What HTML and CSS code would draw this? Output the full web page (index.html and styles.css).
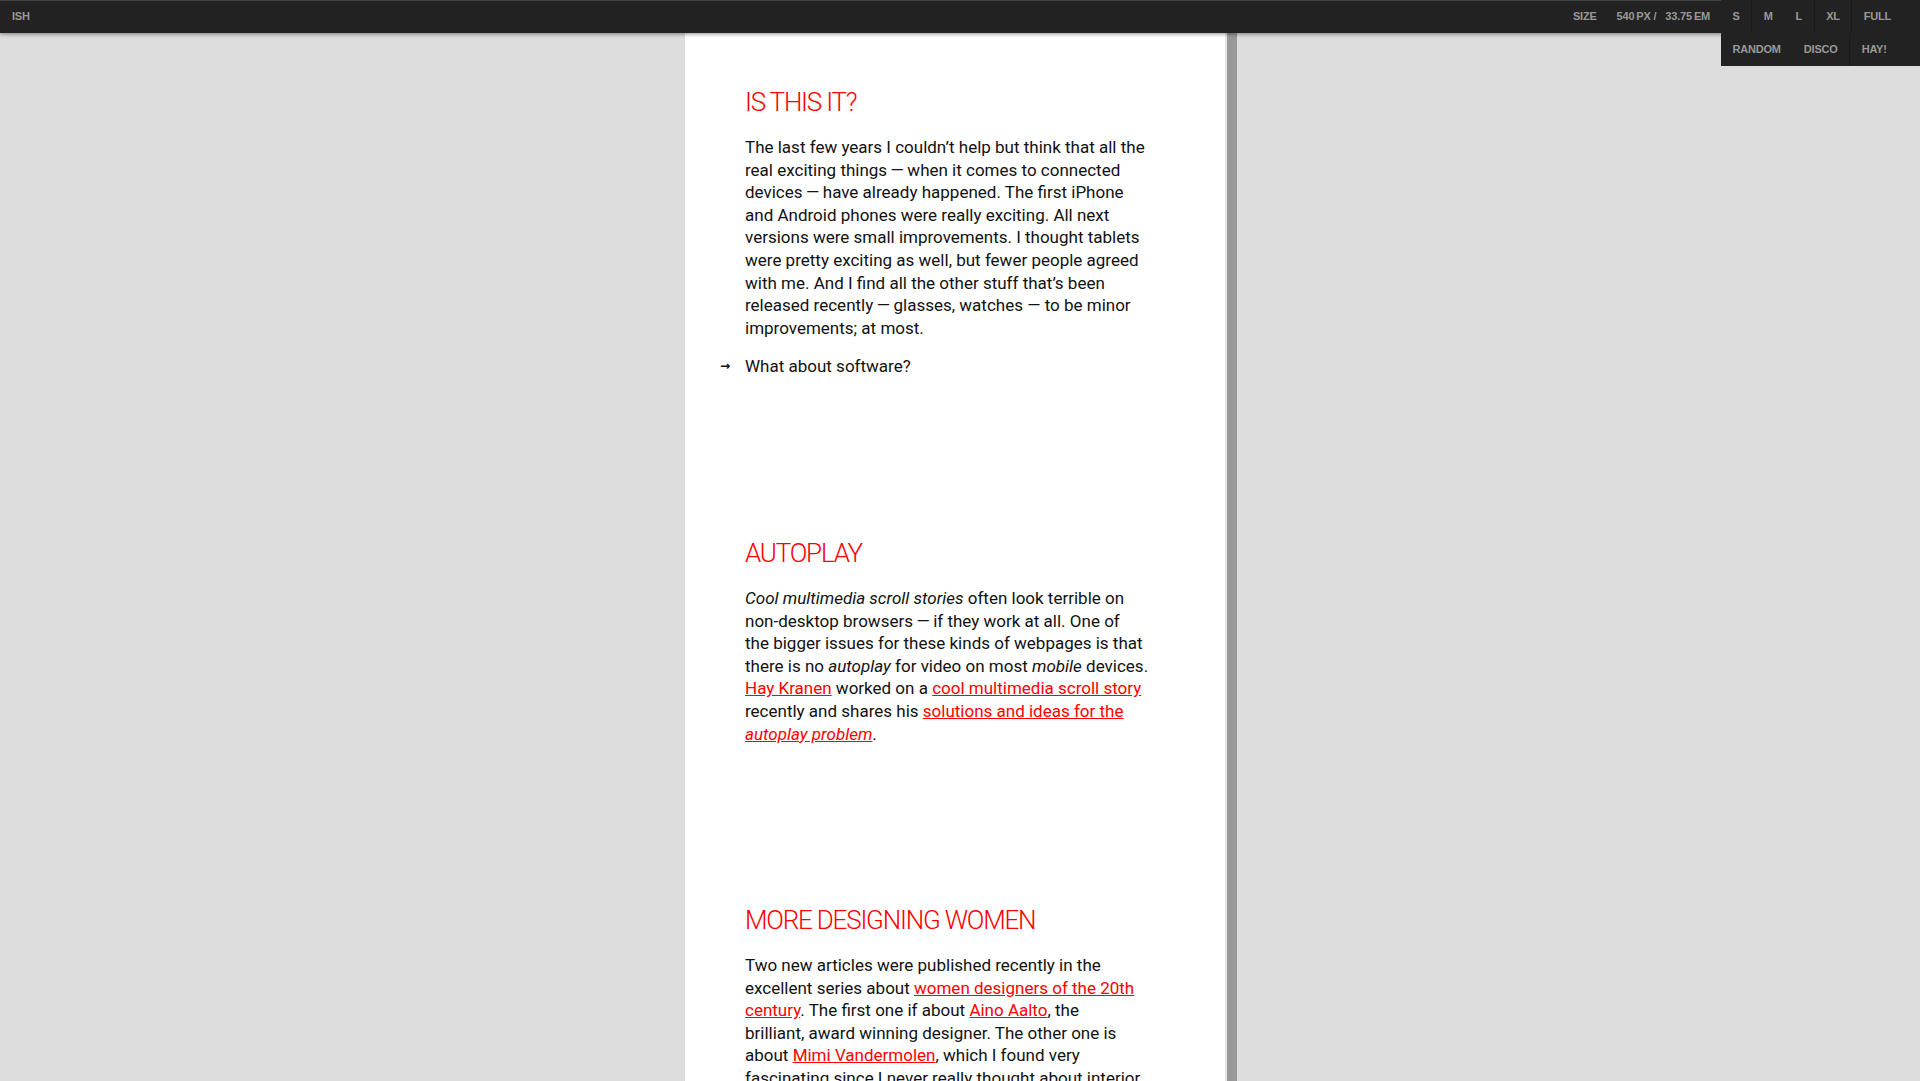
FILE: index.html
```html
<!DOCTYPE html>
<html lang="en">
<head>
<meta charset="utf-8">
<title>ish.</title>
<link rel="stylesheet" href="styles.css">
</head>
<body>
<header class="bar">
  <div class="brand">ISH</div>
  <div class="size">
    <span class="size-label">Size</span>
    <span class="size-val"><span class="px">540</span><span class="unit">px /</span><span class="em">33.75</span><span class="unit">em</span></span>
  </div>
  <ul class="controls">
    <li><a href="#">S</a></li>
    <li class="sep"><a href="#">M</a></li>
    <li><a href="#">L</a></li>
    <li class="sep"><a href="#">XL</a></li>
    <li class="sep"><a href="#">Full</a></li>
    <li><a href="#">Random</a></li>
    <li><a href="#">Disco</a></li>
    <li class="sep"><a href="#">Hay!</a></li>
  </ul>
</header>
<main class="viewport">
  <div class="frame">
    <article class="post">
      <h2>Is this it?</h2>
      <p>The last few years I couldn’t help but think that all the<br>
      real exciting things&thinsp;—&thinsp;when it comes to connected<br>
      devices&thinsp;—&thinsp;have already happened. The first iPhone<br>
      and Android phones were really exciting. All next<br>
      versions were small improvements. I thought tablets<br>
      were pretty exciting as well, but fewer people agreed<br>
      with me. And I find all the other stuff that’s been<br>
      released recently&thinsp;—&thinsp;glasses, watches — to be minor<br>
      improvements; at most.</p>
      <p class="more">What about software?</p>
    </article>
    <article class="post">
      <h2>Autoplay</h2>
      <p><em>Cool multimedia scroll stories</em> often look terrible on<br>
      non-desktop browsers&thinsp;—&thinsp;if they work at all. One of<br>
      the bigger issues for these kinds of webpages is that<br>
      there is no <em>autoplay</em> for video on most <em>mobile</em> devices.<br>
      <a href="#">Hay Kranen</a> worked on a <a href="#">cool multimedia scroll story</a><br>
      recently and shares his <a href="#">solutions and ideas for the<br>
      <em>autoplay problem</em></a>.</p>
    </article>
    <article class="post">
      <h2>More designing women</h2>
      <p>Two new articles were published recently in the<br>
      excellent series about <a href="#">women designers of the 20th<br>
      century</a>. The first one if about <a href="#">Aino Aalto</a>, the<br>
      brilliant, award winning designer. The other one is<br>
      about <a href="#">Mimi Vandermolen</a>, which I found very<br>
      fascinating since I never really thought about interior<br>
      design of cars before.</p>
    </article>
  </div>
  <div class="handle"></div>
</main>
</body>
</html>
```
FILE: styles.css
```css
html, body {
  margin: 0;
  padding: 0;
  height: 100%;
}
body {
  background: #ddd;
  overflow: hidden;
  display: flex;
  flex-direction: column;
}

/* ---------- ish bar ---------- */
.bar {
  position: relative;
  z-index: 3;
  flex: 0 0 auto;
  height: 33px;
  box-sizing: border-box;
  border-top: 1px solid #444;
  background: #222;
  box-shadow: 0 1px 4px rgba(0, 0, 0, 0.45);
  display: flex;
  align-items: flex-start;
  font-family: "Liberation Sans", Arial, sans-serif;
  font-weight: bold;
  font-size: 11px;
  text-transform: uppercase;
  color: #999;
  letter-spacing: -0.2px;
}
.brand {
  line-height: 31px;
  padding-left: 12px;
}
.size {
  margin-left: auto;
  display: flex;
  line-height: 31px;
  margin-right: 11px;
}
.size-label {
  margin-right: 20px;
}
.size-val .px { margin-right: 2px; }
.size-val .em { margin-left: 9px; margin-right: 2px; }

.controls {
  list-style: none;
  margin: -1px 0 0;
  padding: 0;
  width: 199px;
  display: flex;
  flex-wrap: wrap;
  background: #222;
}
.controls li.sep {
  border-left: 1px solid #1a1a1a;
}
.controls a {
  display: block;
  color: #999;
  text-decoration: none;
  padding: 0 11.5px;
  line-height: 33px;
}

/* ---------- viewport ---------- */
.viewport {
  flex: 1 1 auto;
  display: flex;
  justify-content: center;
  padding-left: 2px;
  min-height: 0;
}
.frame {
  width: 542px;
  box-sizing: border-box;
  background: #fff;
  border-right: 2px solid #e6e6e6;
  padding: 53px 70px 0 60px;
  overflow: hidden;
  font-family: Roboto, "Liberation Sans", sans-serif;
  font-size: 17px;
  line-height: 22.6px;
  color: #111;
}
.handle {
  width: 10px;
  background: #999;
}

/* ---------- content ---------- */
.post {
  margin-bottom: 159px;
}
.post h2 {
  margin: 0 0 18px;
  font-family: Roboto, "Liberation Sans", sans-serif;
  font-weight: 300;
  font-size: 26px;
  line-height: 32px;
  letter-spacing: -1.2px;
  text-transform: uppercase;
  color: #f00;
}
.post p {
  margin: 0 0 16px;
}
.post a {
  color: #f00;
  text-decoration: underline;
}
.post p.more {
  position: relative;
}
.post p.more::before {
  content: "→";
  position: absolute;
  left: -25px;
  top: 0;
  font-family: "DejaVu Sans", sans-serif;
  font-size: 12px;
  font-weight: bold;
}
```
